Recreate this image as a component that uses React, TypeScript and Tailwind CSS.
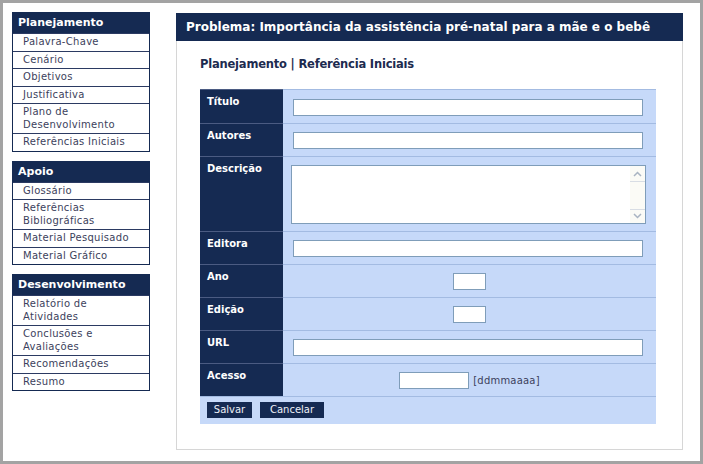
import React from "react";

const navy = "bg-[#152a52]";

const menus = [
  {
    title: "Planejamento",
    items: [
      "Palavra-Chave",
      "Cenário",
      "Objetivos",
      "Justificativa",
      "Plano de Desenvolvimento",
      "Referências Iniciais",
    ],
  },
  {
    title: "Apoio",
    items: [
      "Glossário",
      "Referências Bibliográficas",
      "Material Pesquisado",
      "Material Gráfico",
    ],
  },
  {
    title: "Desenvolvimento",
    items: [
      "Relatório de Atividades",
      "Conclusões e Avaliações",
      "Recomendações",
      "Resumo",
    ],
  },
];

function MenuBox({ title, items }: { title: string; items: string[] }) {
  return (
    <div className="border border-[#152a52] bg-white">
      <div className={`${navy} h-[20px] pl-[5px] text-[11px] font-bold leading-[20px] text-white`}>
        {title}
      </div>
      {items.map((item) => (
        <div
          key={item}
          className="border-t border-[#2b3a62] py-[2px] pl-[10px] pr-2 text-[10px] leading-[12.5px] tracking-[0.3px] text-[#3c3f5c]"
        >
          {item}
        </div>
      ))}
    </div>
  );
}

function TextInput({ className }: { className: string }) {
  return (
    <input
      type="text"
      className={`h-[17px] border border-[#7f9db9] bg-white outline-none ${className}`}
    />
  );
}

function Row({
  label,
  height,
  children,
  center,
}: {
  label: string;
  height: string;
  children: React.ReactNode;
  center?: boolean;
}) {
  return (
    <div className={`flex ${height}`}>
      <div className={`${navy} w-[83px] shrink-0 border-t border-[#4b5b82] px-[7px] pt-[4px] text-[10px] font-bold text-white`}>
        {label}
      </div>
      <div
        className={`flex flex-1 items-center border-t border-[#a3bbe2] bg-[#c6d9f9] pt-[1px] ${
          center ? "justify-center" : "pl-[10px]"
        }`}
      >
        {children}
      </div>
    </div>
  );
}

function Chevron({ up }: { up?: boolean }) {
  return (
    <svg width="9" height="6" viewBox="0 0 9 6">
      <path
        d={up ? "M1 5 L4.5 1.5 L8 5" : "M1 1 L4.5 4.5 L8 1"}
        fill="none"
        stroke="#a9b4c2"
        strokeWidth="1.5"
      />
    </svg>
  );
}

export default function App() {
  return (
    <div className="box-border h-[464px] w-[703px] border-[3px] border-[#a3a3a3] bg-white font-['DejaVu_Sans',sans-serif]">
      <div className="flex pl-[9px] pt-[9px]">
        <div className="flex w-[138px] flex-col gap-[9px]">
          {menus.map((m) => (
            <MenuBox key={m.title} title={m.title} items={m.items} />
          ))}
        </div>

        <section className="ml-[26px] mt-[1px] flex h-[437px] w-[507px] flex-col">
          <div className={`${navy} flex h-[28px] items-center pl-[10px] text-[12px] font-bold text-white`}>
            Problema: Importância da assistência pré-natal para a mãe e o bebê
          </div>
          <div className="flex-1 border-x border-b border-[#d6d6d6] pl-[23px]">
            <h2 className="mt-[15px] text-[11.5px] font-bold tracking-[-0.2px] text-[#1d2b4f]">
              Planejamento | Referência Iniciais
            </h2>

            <div className="mt-[16px] w-[456px] bg-[#c6d9f9]">
              <Row label="Título" height="h-[34px]">
                <TextInput className="w-[350px]" />
              </Row>
              <Row label="Autores" height="h-[33px]">
                <TextInput className="w-[350px]" />
              </Row>
              <Row label="Descrição" height="h-[75px]">
                <div className="-ml-[2px] flex h-[59px] w-[355px] border border-[#7f9db9] bg-white">
                  <textarea className="h-full flex-1 resize-none overflow-hidden outline-none" />
                  <div className="flex w-[15px] flex-col justify-between bg-[#fbfbf6] py-[1px]">
                    <div className="flex h-[15px] items-center justify-center border-b border-[#d8dde4]">
                      <Chevron up />
                    </div>
                    <div className="flex h-[13px] items-center justify-center border-t border-[#d8dde4]">
                      <Chevron />
                    </div>
                  </div>
                </div>
              </Row>
              <Row label="Editora" height="h-[33px]">
                <TextInput className="w-[350px]" />
              </Row>
              <Row label="Ano" height="h-[33px]" center>
                <TextInput className="w-[33px]" />
              </Row>
              <Row label="Edição" height="h-[33px]" center>
                <TextInput className="w-[33px]" />
              </Row>
              <Row label="URL" height="h-[33px]">
                <TextInput className="w-[350px]" />
              </Row>
              <Row label="Acesso" height="h-[33px]" center>
                <TextInput className="w-[70px]" />
                <span className="ml-[4px] text-[10px] tracking-[0.2px] text-[#3c3f5c]">[ddmmaaaa]</span>
              </Row>
              <div className="flex h-[28px] items-start gap-[8px] border-t border-[#a3bbe2] pl-[7px] pt-[5px]">
                <button className={`${navy} h-[16px] w-[45px] text-[10px] leading-[16px] text-[#eef0f6]`}>
                  Salvar
                </button>
                <button className={`${navy} h-[16px] w-[64px] text-[10px] leading-[16px] text-[#eef0f6]`}>
                  Cancelar
                </button>
              </div>
            </div>
          </div>
        </section>
      </div>
    </div>
  );
}
